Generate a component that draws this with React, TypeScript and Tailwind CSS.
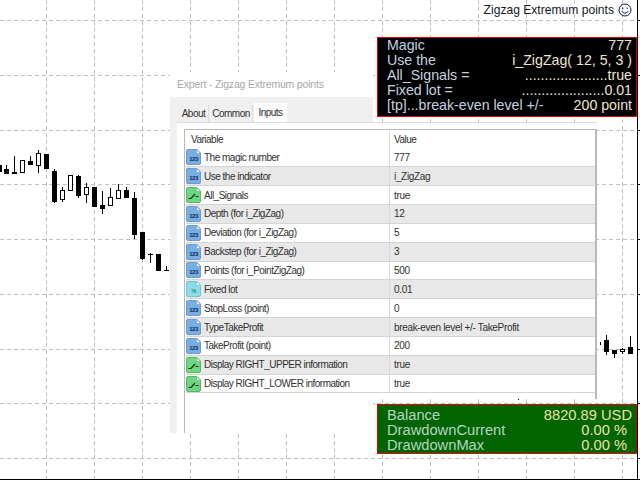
const verticals = [46, 94, 142, 190, 238, 286, 334, 382, 430, 478, 526, 574, 622];
const horizontals = [20, 75, 130, 184.5, 239, 294, 349, 403.5, 458];

// x, wick top, wick bottom, body top, body bottom, filled
const candles: [number, number, number, number, number, boolean][] = [
  [-1, 165, 172, 165, 172, true],
  [6, 165, 174, 169, 174, true],
  [14, 156, 174, 172, 174, true],
  [22, 160, 173, 160, 173, false],
  [30, 156, 165, 161, 165, true],
  [38, 150, 173, 153, 166, false],
  [46, 154, 169, 154, 169, true],
  [54, 169, 203, 171, 202, true],
  [62, 187, 202, 190, 200, false],
  [70, 175, 191, 175, 191, false],
  [78, 175, 198, 176, 196, true],
  [86, 183, 203, 187, 195, false],
  [94, 187, 207, 187, 207, true],
  [102, 191, 214, 205, 209, true],
  [110, 188, 206, 197, 206, false],
  [118, 184, 199, 190, 199, false],
  [126, 187, 198, 190, 198, true],
  [134, 192, 239, 198, 235, true],
  [142, 232, 260, 232, 259, true],
  [150, 253, 263, 254, 255, true],
  [158, 254, 271, 254, 271, true],
  [166, 266, 271, 270, 271, true],
  [606, 335, 355, 340, 352, true],
  [614, 350, 358, 350, 354, true],
  [622, 348, 354, 349, 352, false],
  [630, 336, 354, 347, 354, true],
];

type IconKind = 'num' | 'bool' | 'frac';

const rows: [IconKind, string, string][] = [
  ['num', 'The magic number', '777'],
  ['num', 'Use the indicator', 'i_ZigZag'],
  ['bool', 'All_Signals', 'true'],
  ['num', 'Depth (for i_ZigZag)', '12'],
  ['num', 'Deviation (for i_ZigZag)', '5'],
  ['num', 'Backstep (for i_ZigZag)', '3'],
  ['num', 'Points (for i_PointZigZag)', '500'],
  ['frac', 'Fixed lot', '0.01'],
  ['num', 'StopLoss (point)', '0'],
  ['num', 'TypeTakeProfit', 'break-even level +/- TakeProfit'],
  ['num', 'TakeProfit (point)', '200'],
  ['bool', 'Display RIGHT_UPPER information', 'true'],
  ['bool', 'Display RIGHT_LOWER information', 'true'],
];

const infoRows = [
  ['Magic', '777'],
  ['Use the', 'i_ZigZag( 12, 5, 3 )'],
  ['All_Signals =', '.....................true'],
  ['Fixed lot =', '.....................0.01'],
  ['[tp]...break-even level +/-', '200 point'],
];

const balanceRows = [
  ['Balance', '8820.89 USD', 'pr-[4px]'],
  ['DrawdownCurrent', '0.00 %', 'pr-[9px]'],
  ['DrawdownMax', '0.00 %', 'pr-[9px]'],
];

function Chart() {
  return (
    <svg className="absolute inset-0" width={640} height={480} viewBox="0 0 640 480">
      {verticals.map((x) => (
        <line key={x} x1={x + 0.5} y1={0} x2={x + 0.5} y2={480} stroke="#c0c0c0" strokeDasharray="4 3" />
      ))}
      {horizontals.map((y) => (
        <line key={y} x1={0} y1={Math.floor(y) + 0.5} x2={640} y2={Math.floor(y) + 0.5} stroke="#c0c0c0" strokeDasharray="4 3" />
      ))}
      {candles.map(([x, wt, wb, bt, bb, filled]) => (
        <g key={x}>
          <rect x={x} y={wt} width={1} height={wb - wt} fill="#000" />
          {filled ? (
            <rect x={x - 2} y={bt} width={5} height={Math.max(bb - bt, 1)} fill="#000" />
          ) : (
            <rect x={x - 1.5} y={bt + 0.5} width={4} height={bb - bt - 1} fill="#fff" stroke="#000" />
          )}
        </g>
      ))}
      <rect x={600} y={342} width={1} height={3} fill="#000" />
      <rect x={518} y={399} width={1} height={1} fill="#000" />
      <rect x={637} y={0} width={1} height={480} fill="#000" />
      <rect x={0} y={479} width={640} height={1} fill="#000" />
      {horizontals.map((y) => (
        <rect key={y} x={637} y={Math.floor(y)} width={3} height={1} fill="#000" />
      ))}
    </svg>
  );
}

function Smiley() {
  return (
    <svg width={14} height={14} viewBox="0 0 14 14" fill="none" stroke="#10204a" strokeWidth={1}>
      <circle cx={7} cy={7} r={6} />
      <circle cx={4.8} cy={5.2} r={0.7} fill="#10204a" stroke="none" />
      <circle cx={9.2} cy={5.2} r={0.7} fill="#10204a" stroke="none" />
      <path d="M3.8 8.2c.8 2.4 5.6 2.4 6.4 0" />
    </svg>
  );
}

function ParamIcon({ kind }: { kind: IconKind }) {
  const fill = kind === 'num' ? '#78aee2' : kind === 'bool' ? '#6ed67e' : '#8adde4';
  const edge = kind === 'num' ? '#6a9ccc' : kind === 'bool' ? '#58b868' : '#70c4d0';
  return (
    <svg width={15} height={16} viewBox="0 0 15 16" className="shrink-0">
      <path d="M.5 2a1.5 1.5 0 0 1 1.5-1.5h9l3.5 3.5v10a1.5 1.5 0 0 1-1.5 1.5h-11a1.5 1.5 0 0 1-1.5-1.5z" fill={fill} stroke={edge} />
      <path d="M10.5 .5v4h4z" fill="#eef6fb" stroke={edge} strokeWidth={0.6} />
      {kind === 'bool' ? (
        <path d="M2.5 11.5h2.5l4-4.5M9.5 9.5h3" fill="none" stroke="#14301c" strokeWidth={1.2} />
      ) : (
        <text x={7.5} y={11.5} textAnchor="middle" fontSize={6} fontWeight={700} fontFamily="Liberation Sans, sans-serif" fill={kind === 'num' ? '#0c2c58' : '#2a6a78'}>
          {kind === 'num' ? '123' : '½'}
        </text>
      )}
    </svg>
  );
}

function ExpertWindow() {
  return (
    <div className="absolute left-[170px] top-[72px] flex w-[427px] flex-col text-[10px] tracking-[-0.5px] text-[#303030]">
      <div className="flex h-[25px] w-[203px] items-center whitespace-nowrap bg-white pl-[7px] pt-[1px] text-[10.5px] tracking-[-0.2px] text-[#a8a8a8]">
        Expert - Zigzag Extremum points
      </div>
      <div className="flex h-[25px] w-[203px] items-end gap-px bg-[#f0f0f0] pl-[9px]">
        <div className="flex h-[17px] w-[30px] items-center justify-center border-r border-[#dcdcdc] bg-[#f0f0f0]">About</div>
        <div className="flex h-[17px] w-[43px] items-center justify-center border-r border-[#dcdcdc] bg-[#f0f0f0]">Common</div>
        <div className="flex h-[19px] w-[33px] items-start justify-center bg-white pt-[2px]">Inputs</div>
      </div>
      <div className="flex h-[277px] w-full bg-[#f0f0f0] pl-[7px]">
        <div className="flex flex-1 flex-col border-t border-[#dcdcdc] bg-white pl-[7px] pt-[6px]">
          <div className="flex-1 border-l border-t border-r-2 border-[#b8b8c0] pl-px">
            <div className="flex h-[18.5px] items-center pt-[1px]">
              <div className="w-[204px] border-r border-[#d8d8d8] pl-[5px] leading-[18px]">Variable</div>
              <div className="pl-[4px]">Value</div>
            </div>
            {rows.map(([kind, name, value], i) => (
              <div
                key={name}
                className={`flex h-[18.85px] items-center border-b border-[#d4d4d4] ${i % 2 === 1 ? 'bg-[#e8e8e8]' : 'bg-white'}`}
              >
                <div className="flex h-full w-[204px] items-center gap-[3px] border-r border-[#d8d8d8]">
                  <ParamIcon kind={kind} />
                  <span className="whitespace-nowrap">{name}</span>
                </div>
                <div className="whitespace-nowrap pl-[4px] tracking-[-0.33px]">{value}</div>
              </div>
            ))}
          </div>
        </div>
      </div>
      <div className="flex h-[34px] w-[203px] bg-[#f0f0f0] pl-[7px]">
        <div className="flex-1 bg-white pl-[7px]">
          <div className="h-full w-full border-l border-[#b8b8c0] bg-white" />
        </div>
      </div>
    </div>
  );
}

export default function App() {
  return (
    <div className="relative h-[480px] w-[640px] overflow-hidden bg-white font-['Liberation_Sans',Arial,sans-serif]">
      <Chart />
      <ExpertWindow />

      <div className="absolute right-[8px] top-[3px] flex items-center gap-[4px] text-[12.1px] leading-[14px] text-[#101828]">
        <span className="whitespace-nowrap">Zigzag Extremum points</span>
        <Smiley />
      </div>

      <div className="absolute left-[377px] top-[37px] flex h-[80px] w-[260px] flex-col justify-center border-[1.5px] border-[#e00000] bg-black pb-[4px] pl-[9px] pr-[4px] text-[14.2px] leading-[15px]">
        {infoRows.map(([label, value]) => (
          <div key={label} className="flex justify-between whitespace-nowrap">
            <span className="text-[#c4d2e0]">{label}</span>
            <span className="text-[#f0e4d0]">{value}</span>
          </div>
        ))}
      </div>

      <div className="absolute left-[377px] top-[404px] flex h-[50px] w-[260px] flex-col justify-center border-[1.5px] border-[#e00000] bg-[#006400] pl-[9px] pt-[3px] text-[14.7px] leading-[15px]">
        {balanceRows.map(([label, value, pad]) => (
          <div key={label} className={`flex justify-between whitespace-nowrap ${pad}`}>
            <span className="text-[#b8d4c4]">{label}</span>
            <span className="text-[#f0e0a8]">{value}</span>
          </div>
        ))}
      </div>
    </div>
  );
}
